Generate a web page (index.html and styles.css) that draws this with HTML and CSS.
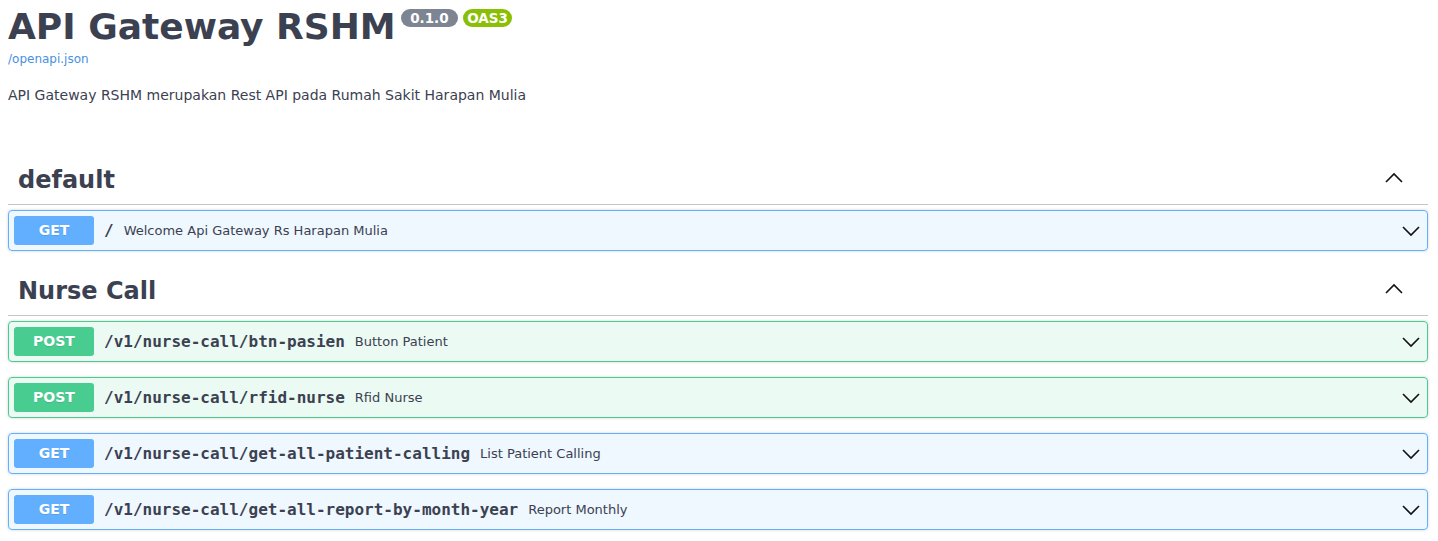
FILE: index.html
```html
<!DOCTYPE html>
<html lang="id">
<head>
<meta charset="utf-8">
<title>API Gateway RSHM</title>
<link rel="stylesheet" href="styles.css">
</head>
<body>
<div class="wrapper">
  <section class="info">
    <div class="title-row">
      <h2 class="title">API Gateway RSHM</h2>
      <span class="badge badge-version">0.1.0</span>
      <span class="badge badge-oas">OAS3</span>
    </div>
    <a class="spec-link" href="#">/openapi.json</a>
    <p class="info-desc">API Gateway RSHM merupakan Rest API pada Rumah Sakit Harapan Mulia</p>
  </section>

  <section class="tag-section">
    <h3 class="tag">
      <span class="tag-name">default</span>
      <svg class="arrow-up" viewBox="0 0 20 20" width="20" height="20"><polyline points="2,14 10,6 18,14"/></svg>
    </h3>
    <div class="opblock opblock-get">
      <span class="method">GET</span>
      <span class="path">/</span>
      <span class="summary">Welcome Api Gateway Rs Harapan Mulia</span>
      <svg class="arrow-down" viewBox="0 0 20 20" width="20" height="20"><polyline points="2,6 10,14 18,6"/></svg>
    </div>
  </section>

  <section class="tag-section">
    <h3 class="tag">
      <span class="tag-name">Nurse Call</span>
      <svg class="arrow-up" viewBox="0 0 20 20" width="20" height="20"><polyline points="2,14 10,6 18,14"/></svg>
    </h3>
    <div class="opblock opblock-post">
      <span class="method">POST</span>
      <span class="path">/v1/nurse-call/btn-pasien</span>
      <span class="summary">Button Patient</span>
      <svg class="arrow-down" viewBox="0 0 20 20" width="20" height="20"><polyline points="2,6 10,14 18,6"/></svg>
    </div>
    <div class="opblock opblock-post">
      <span class="method">POST</span>
      <span class="path">/v1/nurse-call/rfid-nurse</span>
      <span class="summary">Rfid Nurse</span>
      <svg class="arrow-down" viewBox="0 0 20 20" width="20" height="20"><polyline points="2,6 10,14 18,6"/></svg>
    </div>
    <div class="opblock opblock-get">
      <span class="method">GET</span>
      <span class="path">/v1/nurse-call/get-all-patient-calling</span>
      <span class="summary">List Patient Calling</span>
      <svg class="arrow-down" viewBox="0 0 20 20" width="20" height="20"><polyline points="2,6 10,14 18,6"/></svg>
    </div>
    <div class="opblock opblock-get">
      <span class="method">GET</span>
      <span class="path">/v1/nurse-call/get-all-report-by-month-year</span>
      <span class="summary">Report Monthly</span>
      <svg class="arrow-down" viewBox="0 0 20 20" width="20" height="20"><polyline points="2,6 10,14 18,6"/></svg>
    </div>
  </section>
</div>
</body>
</html>
```

FILE: styles.css
```css
html, body {
  margin: 0;
  padding: 0;
  background: #fff;
}

body {
  font-family: "DejaVu Sans", sans-serif;
  color: #3b4151;
  overflow: hidden;
}

.wrapper {
  padding: 6px 10px 0 8px;
}

/* ---------- info ---------- */
.info {
  margin-bottom: 53px;
}

.title-row {
  display: flex;
  align-items: flex-start;
}

.title {
  margin: 0;
  font-size: 36px;
  font-weight: 700;
  line-height: 42px;
  color: #3b4151;
}

.badge {
  display: inline-block;
  margin: 3px 0 0 5px;
  border-radius: 57px;
  color: #fff;
  font-size: 13.5px;
  font-weight: 700;
  line-height: 16px;
  padding: 1px 4px;
}

.badge-version {
  background: #7d8492;
  padding: 1px 9.5px;
}

.badge-oas {
  background: #89bf04;
}

.spec-link {
  display: block;
  margin-top: 4px;
  font-size: 12px;
  line-height: 14px;
  color: #4990e2;
  text-decoration: none;
}

.info-desc {
  margin: 21px 0 0;
  font-size: 14px;
  line-height: 16px;
}

/* ---------- tag sections ---------- */
.tag-section {
  display: flex;
  flex-direction: column;
  margin-bottom: 16px;
}

.tag {
  display: flex;
  align-items: center;
  margin: 0 0 5px;
  padding: 10px 24px 10px 10px;
  border-bottom: 1px solid rgba(59, 65, 81, 0.3);
  font-size: 24px;
  font-weight: 700;
  line-height: 28px;
  color: #3b4151;
}

.tag-name {
  flex: 1 1 auto;
}

.arrow-up {
  margin-bottom: 5px;
  fill: none;
  stroke: #111;
  stroke-width: 1.6;
}

/* ---------- operations ---------- */
.opblock {
  display: flex;
  align-items: center;
  margin: 0 0 15px;
  padding: 5px 6px 5px 5px;
  border: 1px solid #000;
  border-radius: 4px;
  box-shadow: 0 0 3px rgba(0, 0, 0, 0.19);
}

.opblock:last-child {
  margin-bottom: 0;
}

.opblock-get {
  background: rgba(97, 175, 254, 0.1);
  border-color: #61affe;
}

.opblock-post {
  background: rgba(73, 204, 144, 0.1);
  border-color: #49cc90;
}

.method {
  flex: none;
  min-width: 80px;
  padding: 6px 0;
  border-radius: 3px;
  font-size: 14px;
  font-weight: 700;
  line-height: 17px;
  text-align: center;
  color: #fff;
  text-shadow: 0 1px 0 rgba(0, 0, 0, 0.1);
}

.opblock-get .method {
  background: #61affe;
}

.opblock-post .method {
  background: #49cc90;
}

.path {
  flex: none;
  padding: 0 10px;
  font-family: "DejaVu Sans Mono", monospace;
  font-size: 16px;
  font-weight: 700;
  color: #3b4151;
}

.summary {
  flex: 1 1 auto;
  font-size: 13px;
  color: #3b4151;
}

.arrow-down {
  flex: none;
  fill: none;
  stroke: #111;
  stroke-width: 1.6;
}
```
